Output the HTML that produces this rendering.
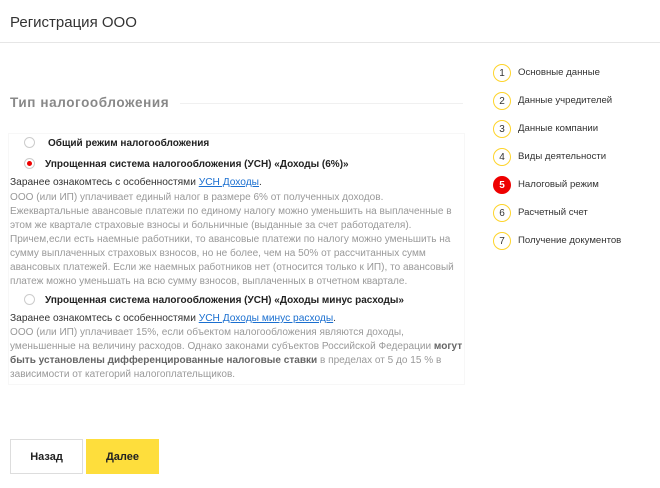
<!DOCTYPE html>
<html><head><meta charset="utf-8"><style>
*{margin:0;padding:0;box-sizing:border-box}
body{width:660px;height:488px;background:#fff;font-family:"Liberation Sans",Arial,sans-serif;position:relative;overflow:hidden;color:#222}
.a{position:absolute;white-space:nowrap}
h1{position:absolute;left:10px;top:14px;font-size:15px;font-weight:normal;color:#333}
.hl{position:absolute;left:0;top:42px;width:660px;height:1px;background:#e6e6e6}
.sec{left:10px;top:95px;font-size:13.5px;font-weight:bold;color:#888;letter-spacing:0.6px}
.sl{position:absolute;left:180px;top:103px;width:283px;height:1px;background:#f0f0f0}
.box{position:absolute;left:8px;top:133px;width:457px;height:252px;border:1px solid #f7f7f7}
.r{position:absolute;width:11px;height:11px;border-radius:50%;border:1px solid #ccc;background:#fff}
.r.on::after{content:"";position:absolute;left:2px;top:2px;width:5px;height:5px;border-radius:50%;background:#e00}
.rl{font-size:10px;font-weight:bold;color:#222}
.t{font-size:10.2px;color:#333}
.t a{color:#1a6fd0;text-decoration:underline}
.p{position:absolute;left:10px;font-size:10.05px;line-height:14px;color:#999;white-space:nowrap}
.p b{color:#666}
.btn{position:absolute;top:439px;width:73px;height:35px;font-size:11px;font-weight:bold;display:flex;align-items:center;justify-content:center;color:#222}
.st{position:absolute;left:493px;font-size:9.6px;color:#333}
.st i{position:absolute;left:0;top:0;width:18px;height:18px;border-radius:50%;border:1.5px solid #fed42b;font-style:normal;font-size:10px;display:flex;align-items:center;justify-content:center;color:#333}
.st i.on{background:#e00;border-color:#e00;color:#fff;font-weight:bold}
.st span{position:absolute;left:25px;top:3px;white-space:nowrap}
</style></head><body>
<h1>Регистрация ООО</h1>
<div class="hl"></div>
<div class="a sec">Тип налогообложения</div>
<div class="sl"></div>
<div class="box"></div>
<div class="r" style="left:24px;top:137px"></div>
<div class="a rl" style="left:48px;top:138px">Общий режим налогообложения</div>
<div class="r on" style="left:24px;top:158px"></div>
<div class="a rl" style="left:45px;top:159px">Упрощенная система налогообложения (УСН) «Доходы (6%)»</div>
<div class="a t" style="left:10px;top:177px">Заранее ознакомтесь с особенностями <a>УСН Доходы</a>.</div>
<div class="p" style="top:191px">ООО (или ИП) уплачивает единый налог в размере 6% от полученных доходов.<br>Ежеквартальные авансовые платежи по единому налогу можно уменьшить на выплаченные в<br>этом же квартале страховые взносы и больничные (выданные за счет работодателя).<br>Причем,если есть наемные работники, то авансовые платежи по налогу можно уменьшить на<br>сумму выплаченных страховых взносов, но не более, чем на 50% от рассчитанных сумм<br>авансовых платежей. Если же наемных работников нет (относится только к ИП), то авансовый<br>платеж можно уменьшать на всю сумму взносов, выплаченных в отчетном квартале.</div>
<div class="r" style="left:24px;top:294px"></div>
<div class="a rl" style="left:45px;top:295px">Упрощенная система налогообложения (УСН) «Доходы минус расходы»</div>
<div class="a t" style="left:10px;top:313px">Заранее ознакомтесь с особенностями <a>УСН Доходы минус расходы</a>.</div>
<div class="p" style="top:326px">ООО (или ИП) уплачивает 15%, если объектом налогообложения являются доходы,<br>уменьшенные на величину расходов. Однако законами субъектов Российской Федерации <b>могут</b><br><b>быть установлены дифференцированные налоговые ставки</b> в пределах от 5 до 15 % в<br>зависимости от категорий налогоплательщиков.</div>
<div class="btn" style="left:10px;border:1px solid #ddd;background:#fff">Назад</div>
<div class="btn" style="left:86px;background:#fede3c">Далее</div>
<div class="st" style="top:64px"><i>1</i><span>Основные данные</span></div>
<div class="st" style="top:92px"><i>2</i><span>Данные учредителей</span></div>
<div class="st" style="top:120px"><i>3</i><span>Данные компании</span></div>
<div class="st" style="top:148px"><i>4</i><span>Виды деятельности</span></div>
<div class="st" style="top:176px"><i class="on">5</i><span>Налоговый режим</span></div>
<div class="st" style="top:204px"><i>6</i><span>Расчетный счет</span></div>
<div class="st" style="top:232px"><i>7</i><span>Получение документов</span></div>
</body></html>
